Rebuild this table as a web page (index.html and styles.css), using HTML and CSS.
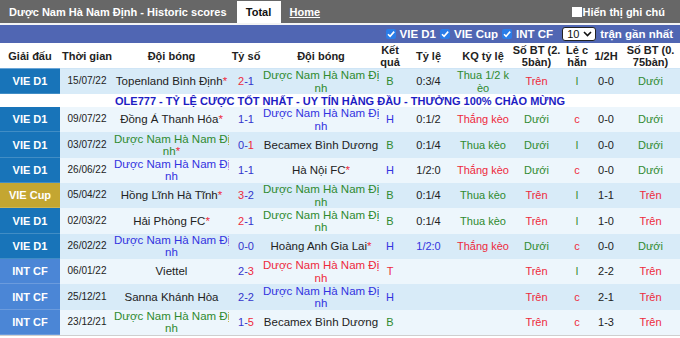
FILE: index.html
```html
<!DOCTYPE html>
<html lang="vi">
<head>
<meta charset="utf-8">
<title>Historic scores</title>
<link rel="stylesheet" href="styles.css">
</head>
<body>
<div class="page">
  <div class="topbar">
    <span class="title">Dược Nam Hà Nam Định - Historic scores</span>
    <span class="tab tab-active">Total</span>
    <span class="tab tab-link">Home</span>
    <span class="notes"><span class="box-white"></span>Hiển thị ghi chú</span>
  </div>
  <div class="filterbar">
    <span class="cb"><svg width="10" height="10" viewBox="0 0 10 10"><path d="M2 5.2 L4.1 7.3 L8.2 2.6" fill="none" stroke="#fff" stroke-width="1.6"/></svg></span>
    <span class="flabel">VIE D1</span>
    <span class="cb"><svg width="10" height="10" viewBox="0 0 10 10"><path d="M2 5.2 L4.1 7.3 L8.2 2.6" fill="none" stroke="#fff" stroke-width="1.6"/></svg></span>
    <span class="flabel">VIE Cup</span>
    <span class="cb"><svg width="10" height="10" viewBox="0 0 10 10"><path d="M2 5.2 L4.1 7.3 L8.2 2.6" fill="none" stroke="#fff" stroke-width="1.6"/></svg></span>
    <span class="flabel">INT CF</span>
    <span class="sel">10<svg width="9" height="6" viewBox="0 0 9 6"><path d="M1 1 L4.5 4.5 L8 1" fill="none" stroke="#111" stroke-width="1.6"/></svg></span>
    <span class="flabel last">trận gần nhất</span>
  </div>
  <table class="scores">
    <colgroup>
      <col class="c1"><col class="c2"><col class="c3"><col class="c4"><col class="c5"><col class="c6">
      <col class="c7"><col class="c8"><col class="c9"><col class="c10"><col class="c11"><col class="c12">
    </colgroup>
    <thead>
      <tr>
        <th class="first">Giải đấu</th><th>Thời gian</th><th>Đội bóng</th><th>Tỷ số</th><th>Đội bóng</th>
        <th>Kết<br>quả</th><th>Tỷ lệ</th><th>KQ tỷ lệ</th><th>Số BT (2.<br>5bàn)</th><th>Lẻ c<br>hẵn</th><th>1/2H</th><th>Số BT (0.<br>75bàn)</th>
      </tr>
    </thead>
    <tbody>
      <tr class="odd">
        <td class="lg d1">VIE D1</td><td class="date">15/07/22</td>
        <td class="team">Topenland Bình Định<span class="star">*</span></td>
        <td class="sc"><span class="rd">2</span>-1</td>
        <td class="team gr">Dược Nam Hà Nam Đị<br>nh</td>
        <td class="gr">B</td><td>0:3/4</td><td class="gr">Thua 1/2 k<br>èo</td><td class="rd">Trên</td><td class="gr">l</td><td>0-0</td><td class="gr">Dưới</td>
      </tr>
      <tr class="ad">
        <td colspan="12">OLE777 - TỶ LỆ CƯỢC TỐT NHẤT - UY TÍN HÀNG ĐẦU - THƯỞNG 100% CHÀO MỪNG</td>
      </tr>
      <tr class="even">
        <td class="lg d1">VIE D1</td><td class="date">09/07/22</td>
        <td class="team">Đồng Á Thanh Hóa<span class="star">*</span></td>
        <td class="sc">1-1</td>
        <td class="team bl">Dược Nam Hà Nam Đị<br>nh</td>
        <td class="bl">H</td><td>0:1/2</td><td class="rd">Thắng kèo</td><td class="gr">Dưới</td><td class="rd">c</td><td>0-0</td><td class="gr">Dưới</td>
      </tr>
      <tr class="odd">
        <td class="lg d1">VIE D1</td><td class="date">03/07/22</td>
        <td class="team gr">Dược Nam Hà Nam Đị<br>nh<span class="star">*</span></td>
        <td class="sc">0-<span class="rd">1</span></td>
        <td class="team">Becamex Bình Dương</td>
        <td class="gr">B</td><td>0:1/4</td><td class="gr">Thua kèo</td><td class="gr">Dưới</td><td class="gr">l</td><td>0-0</td><td class="gr">Dưới</td>
      </tr>
      <tr class="even">
        <td class="lg d1">VIE D1</td><td class="date">26/06/22</td>
        <td class="team bl">Dược Nam Hà Nam Đị<br>nh</td>
        <td class="sc">1-1</td>
        <td class="team">Hà Nội FC<span class="star">*</span></td>
        <td class="bl">H</td><td>1/2:0</td><td class="rd">Thắng kèo</td><td class="gr">Dưới</td><td class="rd">c</td><td>0-0</td><td class="gr">Dưới</td>
      </tr>
      <tr class="odd">
        <td class="lg cup">VIE Cup</td><td class="date">05/04/22</td>
        <td class="team">Hồng Lĩnh Hà Tĩnh<span class="star">*</span></td>
        <td class="sc"><span class="rd">3</span>-2</td>
        <td class="team gr">Dược Nam Hà Nam Đị<br>nh</td>
        <td class="gr">B</td><td>0:1/4</td><td class="gr">Thua kèo</td><td class="rd">Trên</td><td class="gr">l</td><td>1-1</td><td class="rd">Trên</td>
      </tr>
      <tr class="even">
        <td class="lg d1">VIE D1</td><td class="date">02/03/22</td>
        <td class="team">Hải Phòng FC<span class="star">*</span></td>
        <td class="sc"><span class="rd">2</span>-1</td>
        <td class="team gr">Dược Nam Hà Nam Đị<br>nh</td>
        <td class="gr">B</td><td>0:1/4</td><td class="gr">Thua kèo</td><td class="rd">Trên</td><td class="gr">l</td><td>1-0</td><td class="rd">Trên</td>
      </tr>
      <tr class="odd">
        <td class="lg d1">VIE D1</td><td class="date">26/02/22</td>
        <td class="team bl">Dược Nam Hà Nam Đị<br>nh</td>
        <td class="sc">0-0</td>
        <td class="team">Hoàng Anh Gia Lai<span class="star">*</span></td>
        <td class="bl">H</td><td class="bl">1/2:0</td><td class="rd">Thắng kèo</td><td class="gr">Dưới</td><td class="rd">c</td><td>0-0</td><td class="gr">Dưới</td>
      </tr>
      <tr class="even">
        <td class="lg int">INT CF</td><td class="date">06/01/22</td>
        <td class="team">Viettel</td>
        <td class="sc">2-<span class="rd">3</span></td>
        <td class="team rd">Dược Nam Hà Nam Đị<br>nh</td>
        <td class="rd">T</td><td></td><td></td><td class="rd">Trên</td><td class="gr">l</td><td>2-2</td><td class="rd">Trên</td>
      </tr>
      <tr class="odd">
        <td class="lg int">INT CF</td><td class="date">25/12/21</td>
        <td class="team">Sanna Khánh Hòa</td>
        <td class="sc">2-2</td>
        <td class="team bl">Dược Nam Hà Nam Đị<br>nh</td>
        <td class="bl">H</td><td></td><td></td><td class="rd">Trên</td><td class="rd">c</td><td>2-1</td><td class="rd">Trên</td>
      </tr>
      <tr class="even">
        <td class="lg int">INT CF</td><td class="date">23/12/21</td>
        <td class="team gr">Dược Nam Hà Nam Đị<br>nh</td>
        <td class="sc">1-<span class="rd">5</span></td>
        <td class="team">Becamex Bình Dương</td>
        <td class="gr">B</td><td></td><td></td><td class="rd">Trên</td><td class="rd">c</td><td>1-3</td><td class="rd">Trên</td>
      </tr>
    </tbody>
  </table>
</div>
</body>
</html>
```
FILE: styles.css
```css
html, body {
  margin: 0;
  padding: 0;
  background: #fff;
}
.page {
  width: 680px;
  font-family: "Liberation Sans", Arial, sans-serif;
  color: #222;
}
.topbar {
  display: flex;
  align-items: center;
  height: 23px;
  background: #676767;
  border-bottom: 2px solid #f4f4f4;
  color: #fff;
  font-weight: bold;
  font-size: 11px;
}
.title {
  padding-left: 9px;
}
.tab {
  display: flex;
  align-items: center;
  justify-content: center;
}
.tab-active {
  align-self: flex-end;
  margin-left: 10px;
  width: 44px;
  height: 22px;
  background: #fff;
  color: #111;
}
.tab-link {
  margin-left: 9px;
  text-decoration: underline;
}
.notes {
  margin-left: auto;
  margin-right: 15px;
  display: flex;
  align-items: center;
  gap: 1px;
}
.box-white {
  width: 10px;
  height: 10px;
  background: #fff;
}
.filterbar {
  height: 18px;
  background: #5066b3;
  display: flex;
  justify-content: flex-end;
  align-items: center;
  padding-right: 7px;
  color: #fff;
  font-weight: bold;
  font-size: 11.5px;
}
.cb {
  display: inline-flex;
  width: 10px;
  height: 10px;
  background: #2a7de8;
  border-radius: 2px;
  margin-right: 4px;
}
.flabel {
  margin-right: 4px;
}
.flabel.last {
  margin-right: 0;
}
.sel {
  display: inline-flex;
  align-items: center;
  justify-content: space-between;
  box-sizing: border-box;
  width: 34px;
  height: 14px;
  margin: 0 4px 0 5px;
  padding: 0 3px 0 4px;
  border: 1px solid #222;
  border-radius: 3px;
  background: #fff;
  color: #111;
  font-weight: normal;
  font-size: 11px;
}
.scores {
  width: 680px;
  table-layout: fixed;
  border-collapse: collapse;
  border-spacing: 0;
  border-bottom: 1px solid #cfcfcf;
}
.c1 { width: 60px; }
.c2 { width: 54px; }
.c3 { width: 115px; }
.c4 { width: 34px; }
.c5 { width: 116px; }
.c6 { width: 22px; }
.c7 { width: 55px; }
.c8 { width: 54px; }
.c9 { width: 53px; }
.c10 { width: 28px; }
.c11 { width: 30px; }
.c12 { width: 59px; }
.scores th {
  height: 25px;
  padding: 0;
  font-size: 11px;
  line-height: 12px;
  font-weight: bold;
  color: #222;
  text-align: center;
  vertical-align: middle;
  white-space: nowrap;
  background: #fff;
  border-bottom: 1px solid #cfe5f6;
}
.scores th.first {
  border-bottom-color: #6aa6d8;
}
.scores tbody tr {
  height: 25.35px;
}
.scores td {
  padding: 0;
  font-size: 11px;
  line-height: 12.5px;
  text-align: center;
  vertical-align: middle;
  white-space: nowrap;
  color: #222;
  overflow: hidden;
}
.scores tr.odd td {
  background: #d8ebf8;
}
.scores tr.even td {
  background: #edf6fc;
}
.scores td.lg {
  color: #fff;
  font-weight: bold;
  font-size: 11px;
  box-shadow: inset 0 -1px 0 rgba(255, 255, 255, 0.18);
}
.scores tr td.d1 { background: #1874b9; }
.scores tr td.cup { background: #c4a631; }
.scores tr td.int { background: #4b86d6; }
.scores td.date {
  font-size: 10px;
}
.scores td.team {
  font-size: 11.5px;
}
.scores td.sc {
  color: #3434cc;
}
.scores tbody tr.ad {
  height: 12.6px;
}
.scores tr.ad td {
  background: #fff;
  color: #1d1dc4;
  font-weight: bold;
  font-size: 11px;
  line-height: 12px;
  padding-top: 1px;
}
.scores td.gr, .gr { color: #2f8a2f; }
.scores td.rd, .rd { color: #ee2a3c; }
.scores td.bl, .bl { color: #3333e0; }
.star { color: #ee2a3c; }
```
